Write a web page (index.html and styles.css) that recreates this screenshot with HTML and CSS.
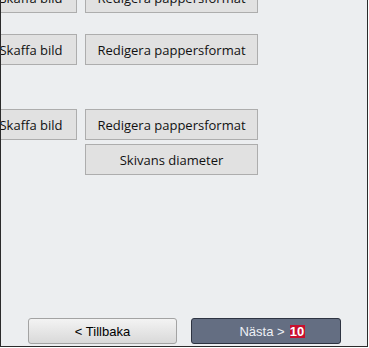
FILE: index.html
```html
<!DOCTYPE html>
<html>
<head>
<meta charset="utf-8">
<link rel="stylesheet" href="styles.css">
</head>
<body>
<div class="frame">
  <div class="content">
    <div class="row row-first">
      <button class="btn btn-small">Skaffa bild</button>
      <button class="btn btn-wide">Redigera pappersformat</button>
    </div>
    <div class="row row-second">
      <button class="btn btn-small">Skaffa bild</button>
      <button class="btn btn-wide">Redigera pappersformat</button>
    </div>
    <div class="row row-third">
      <button class="btn btn-small">Skaffa bild</button>
      <button class="btn btn-wide">Redigera pappersformat</button>
    </div>
    <div class="row row-fourth">
      <span class="spacer"></span>
      <button class="btn btn-wide">Skivans diameter</button>
    </div>
  </div>
  <div class="footer">
    <button class="nav nav-back">&lt; Tillbaka</button>
    <button class="nav nav-next">Nästa &gt; <span class="badge">10</span></button>
  </div>
</div>
</body>
</html>
```
FILE: styles.css
```css
html, body {
  margin: 0;
  padding: 0;
  background: #ffffff;
}
.frame {
  box-sizing: border-box;
  width: 368px;
  height: 347px;
  background: #eceef0;
  border-left: 1px solid #2b2b2b;
  border-right: 1px solid #2b2b2b;
  border-bottom: 1px solid #2b2b2b;
  display: flex;
  flex-direction: column;
  overflow: hidden;
}
.content {
  display: flex;
  flex-direction: column;
  margin-left: -16px;
}
.row {
  display: grid;
  grid-template-columns: 92px 173px;
  column-gap: 8px;
}
.row-first { margin-top: -18px; }
.row-second { margin-top: 21px; }
.row-third { margin-top: 44px; }
.row-fourth { margin-top: 4px; }
.btn {
  box-sizing: border-box;
  height: 31px;
  margin: 0;
  padding: 0;
  background: #e1e1e1;
  border: 1px solid #adadad;
  border-radius: 0;
  font-family: "Open Sans", "Noto Sans", sans-serif;
  font-size: 13px;
  color: #111111;
  white-space: nowrap;
  text-align: center;
}
.footer {
  margin-top: auto;
  display: flex;
  padding: 0 26px 2px 27px;
  gap: 14px;
}
.nav {
  box-sizing: border-box;
  height: 26px;
  margin: 0;
  padding: 0;
  border-radius: 3px;
  font-family: "Liberation Sans", Arial, sans-serif;
  font-size: 13px;
  display: flex;
  align-items: center;
  justify-content: center;
  white-space: nowrap;
}
.nav-back {
  width: 149px;
  background: linear-gradient(#f3f3f3, #d9d9d9);
  border: 1px solid #a3a3a3;
  color: #000;
}
.nav-next {
  width: 150px;
  padding-left: 12px;
  background: #646e82;
  border: 1px solid #2e3442;
  color: #eef1f6;
}
.badge {
  display: inline-block;
  margin-left: 5px;
  width: 15px;
  height: 13px;
  line-height: 13px;
  background: #c8102e;
  color: #fff;
  font-weight: bold;
  font-size: 13px;
  text-align: center;
}
```
